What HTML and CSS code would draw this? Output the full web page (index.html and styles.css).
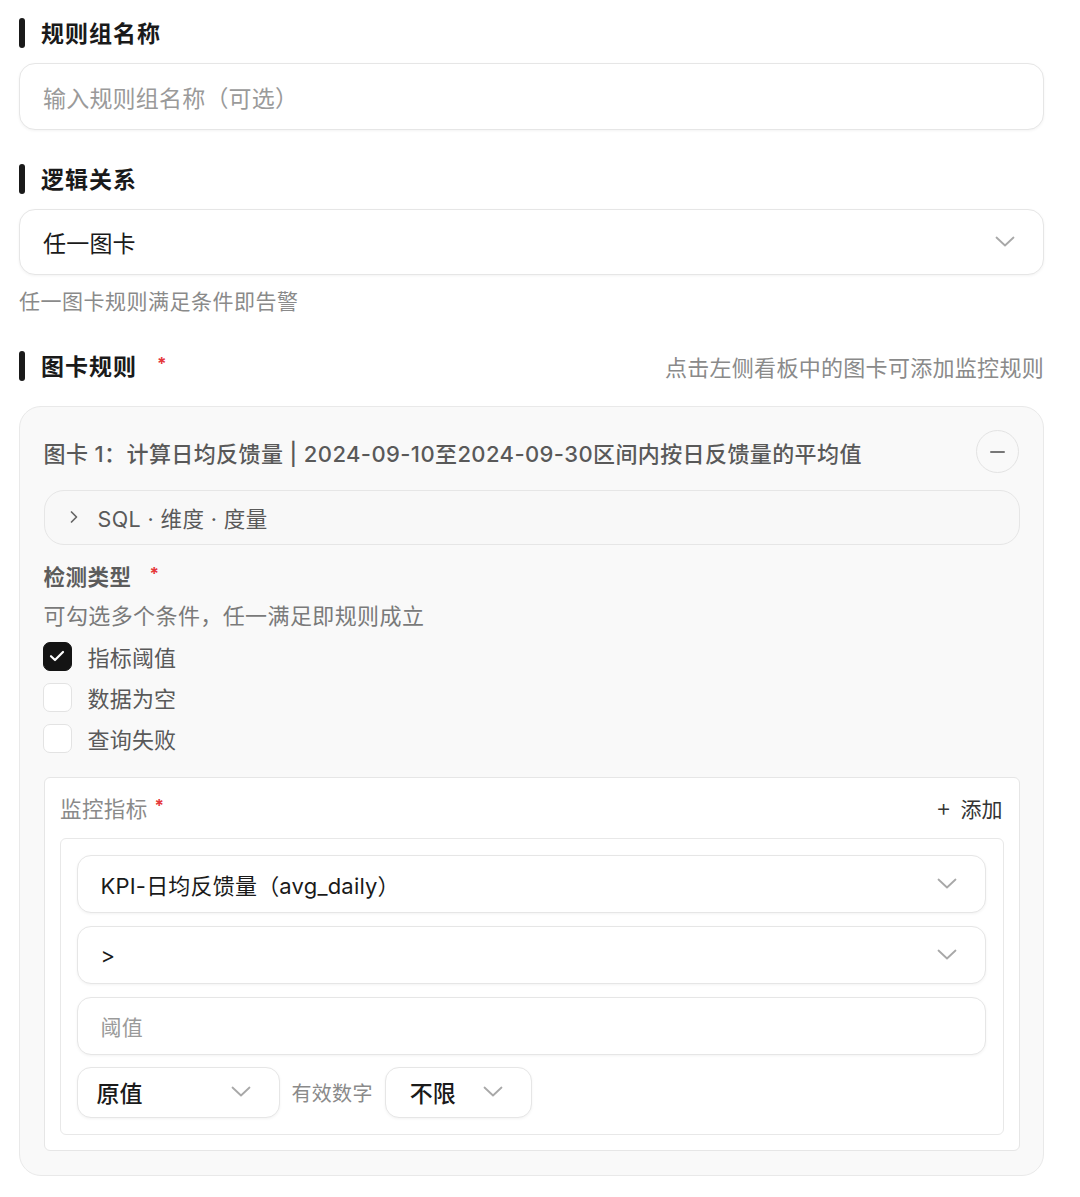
FILE: index.html
```html
<!DOCTYPE html>
<html lang="zh-CN">
<head>
<meta charset="utf-8">
<link rel="stylesheet" href="styles.css">
</head>
<body>
<div class="page">
  <div class="sec-head"><span class="bar"></span><span class="sec-title">规则组名称</span></div>
  <div class="field field-lg"><span class="placeholder">输入规则组名称（可选）</span></div>

  <div class="sec-head sec-gap"><span class="bar"></span><span class="sec-title">逻辑关系</span></div>
  <div class="field field-lg select">
    <span class="value">任一图卡</span>
    <svg class="chev" width="20" height="12" viewBox="0 0 20 12"><path d="M1.5 1.5 L10 9.5 L18.5 1.5" fill="none" stroke="#a8a8a8" stroke-width="1.8" stroke-linecap="round" stroke-linejoin="round"/></svg>
  </div>
  <div class="helper">任一图卡规则满足条件即告警</div>

  <div class="sec-head sec-gap2 between">
    <div class="head-left"><span class="bar"></span><span class="sec-title">图卡规则</span><span class="req req-head">*</span></div>
    <span class="head-tip">点击左侧看板中的图卡可添加监控规则</span>
  </div>

  <div class="card">
    <div class="card-title-row">
      <span class="card-title">图卡 1：计算日均反馈量 | 2024-09-10至2024-09-30区间内按日反馈量的平均值</span>
      <span class="minus-btn"><span class="minus"></span></span>
    </div>
    <div class="collapse-row">
      <svg class="right-chev" width="10" height="16" viewBox="0 0 10 16"><path d="M2.5 3 L7.5 8 L2.5 13" fill="none" stroke="#666" stroke-width="1.7" stroke-linecap="round" stroke-linejoin="round"/></svg>
      <span class="collapse-text">SQL · 维度 · 度量</span>
    </div>
    <div class="label-row"><span class="label">检测类型</span><span class="req req-label">*</span></div>
    <div class="hint">可勾选多个条件，任一满足即规则成立</div>
    <div class="check-list">
      <div class="check-row">
        <span class="box checked"><svg width="16" height="12" viewBox="0 0 16 12"><path d="M2 6.2 L6 10 L14 2" fill="none" stroke="#fff" stroke-width="2.2" stroke-linecap="round" stroke-linejoin="round"/></svg></span>
        <span class="check-text">指标阈值</span>
      </div>
      <div class="check-row"><span class="box"></span><span class="check-text">数据为空</span></div>
      <div class="check-row"><span class="box"></span><span class="check-text">查询失败</span></div>
    </div>

    <div class="metric-box">
      <div class="metric-head">
        <div class="metric-left"><span class="metric-label">监控指标</span><span class="req req-metric">*</span></div>
        <span class="add-btn"><span class="plus">+</span>添加</span>
      </div>
      <div class="metric-inner">
        <div class="field field-md select">
          <span class="value">KPI-日均反馈量（avg_daily）</span>
          <svg class="chev" width="20" height="12" viewBox="0 0 20 12"><path d="M1.5 1.5 L10 9.5 L18.5 1.5" fill="none" stroke="#a8a8a8" stroke-width="1.8" stroke-linecap="round" stroke-linejoin="round"/></svg>
        </div>
        <div class="field field-md select">
          <span class="value">&gt;</span>
          <svg class="chev" width="20" height="12" viewBox="0 0 20 12"><path d="M1.5 1.5 L10 9.5 L18.5 1.5" fill="none" stroke="#a8a8a8" stroke-width="1.8" stroke-linecap="round" stroke-linejoin="round"/></svg>
        </div>
        <div class="field field-md"><span class="placeholder">阈值</span></div>
        <div class="bottom-row">
          <div class="mini-select w-raw">
            <span class="mini-value">原值</span>
            <svg class="chev" width="20" height="12" viewBox="0 0 20 12"><path d="M1.5 1.5 L10 9.5 L18.5 1.5" fill="none" stroke="#a8a8a8" stroke-width="1.8" stroke-linecap="round" stroke-linejoin="round"/></svg>
          </div>
          <span class="mini-label">有效数字</span>
          <div class="mini-select w-limit">
            <span class="mini-value">不限</span>
            <svg class="chev" width="20" height="12" viewBox="0 0 20 12"><path d="M1.5 1.5 L10 9.5 L18.5 1.5" fill="none" stroke="#a8a8a8" stroke-width="1.8" stroke-linecap="round" stroke-linejoin="round"/></svg>
          </div>
        </div>
      </div>
    </div>
  </div>
</div>
</body>
</html>
```

FILE: styles.css
```css
* { box-sizing: border-box; }
html, body { margin: 0; padding: 0; background: #fff; }
body {
  font-family: Inter, "Noto Sans CJK SC", "Noto Sans", sans-serif;
  color: #1f1f1f;
}
.page {
  width: 1025px;
  margin-left: 19px;
  padding-top: 17px;
}
.sec-head {
  height: 32px;
  display: flex;
  align-items: center;
}
.sec-gap { margin-top: 33px; }
.sec-gap2 { margin-top: 33px; }
.between { justify-content: space-between; }
.head-left { display: flex; align-items: center; }
.bar {
  width: 6px;
  height: 30px;
  border-radius: 3px;
  background: #1a1a1a;
  margin-right: 16px;
}
.sec-title {
  font-size: 23px;
  font-weight: 700;
  color: #1a1a1a;
  letter-spacing: 1px;
  position: relative;
  top: -1px;
}
.req { color: #e5383b; font-size: 17px; font-weight: 700; }
.req-head { margin-left: 20px; position: relative; top: -2px; }
.head-tip { font-size: 22px; color: #8a8a8a; letter-spacing: 0.3px; }

.field {
  background: #fff;
  border: 1.5px solid #e6e6e6;
  box-shadow: 0 1px 3px rgba(0,0,0,0.05);
  display: flex;
  align-items: center;
  justify-content: space-between;
}
.field-lg {
  margin-top: 14px;
  height: 67px;
  border-radius: 16px;
  padding: 0 28px 0 23px;
}
.page > .field-lg.select { height: 66px; margin-top: 14px; }
.placeholder { font-size: 23px; color: #9a9a9a; letter-spacing: 0.2px; }
.value { font-size: 23px; color: #1a1a1a; letter-spacing: 0.2px; }
.chev { display: block; }

.helper {
  margin-top: 12px;
  height: 30px;
  line-height: 30px;
  font-size: 21px;
  color: #8a8a8a;
  letter-spacing: 0.5px;
}

.card {
  margin-top: 24px;
  background: #f9f9f9;
  border: 1.5px solid #e9e9e9;
  border-radius: 22px;
  padding: 23.5px 23.5px 24.5px 23.5px;
}
.card-title-row {
  height: 42px;
  display: flex;
  align-items: center;
  justify-content: space-between;
}
.card-title {
  font-size: 22px;
  color: #595959;
  font-weight: 500;
  letter-spacing: 0.4px;
}
.minus-btn {
  width: 43px;
  height: 43px;
  border-radius: 50%;
  border: 1.5px solid #e3e3e3;
  display: flex;
  align-items: center;
  justify-content: center;
  margin-right: 1px;
}
.minus { width: 15px; height: 2px; background: #777; border-radius: 1px; }

.collapse-row {
  margin-top: 17px;
  height: 55px;
  border: 1.5px solid #e6e6e6;
  border-radius: 20px;
  background: #f8f8f8;
  display: flex;
  align-items: center;
  padding-left: 24px;
}
.right-chev { margin-right: 19px; }
.collapse-text { font-size: 21.5px; color: #5a5a5a; letter-spacing: 0.4px; }

.label-row { margin-top: 16px; height: 30px; display: flex; align-items: center; }
.label { font-size: 21.5px; font-weight: 600; color: #5c5c5c; letter-spacing: 0.5px; }
.req-label { margin-left: 18px; position: relative; top: -2px; }
.hint {
  margin-top: 10px;
  height: 30px;
  line-height: 30px;
  font-size: 22px;
  color: #7a7a7a;
  letter-spacing: 0.4px;
}
.check-list { margin-top: 5px; }
.check-row { height: 41px; display: flex; align-items: center; }
.box {
  width: 29px;
  height: 29px;
  border-radius: 7px;
  border: 1.5px solid #e3e3e3;
  background: #fff;
  margin-right: 16px;
  margin-left: -1px;
  display: flex;
  align-items: center;
  justify-content: center;
}
.box.checked { background: #141414; border-color: #141414; }
.check-text { font-size: 22px; color: #595959; letter-spacing: 0.2px; }

.metric-box {
  margin-top: 18px;
  background: #fff;
  border: 1.5px solid #e6e6e6;
  border-radius: 6px;
  padding: 15px 15px 15px 15.5px;
}
.metric-head {
  height: 30px;
  display: flex;
  align-items: center;
  justify-content: space-between;
}
.metric-left { display: flex; align-items: center; }
.metric-label { font-size: 21.5px; color: #8a8a8a; letter-spacing: 0.4px; }
.req-metric { margin-left: 7px; position: relative; top: -2px; }
.add-btn { font-size: 21px; color: #333; display: flex; align-items: center; margin-right: 1px; }
.plus { font-size: 24px; margin-right: 9px; font-weight: 300; }

.metric-inner {
  margin-top: 15px;
  border: 1.5px solid #e8e8e8;
  border-radius: 6px;
  padding: 16px 17px 16px 15.5px;
  display: flex;
  flex-direction: column;
  gap: 13px;
}
.field-md {
  height: 58px;
  border-radius: 14px;
  padding: 0 28px 0 23px;
}
.field-md .value { font-size: 22px; }
.field-md .placeholder { font-size: 21px; }
.bottom-row {
  margin-top: -1px;
  height: 51px;
  display: flex;
  align-items: center;
}
.mini-select {
  height: 51px;
  border: 1.5px solid #e6e6e6;
  border-radius: 14px;
  background: #fff;
  box-shadow: 0 1px 3px rgba(0,0,0,0.05);
  display: flex;
  align-items: center;
  justify-content: space-between;
  padding: 0 28px 0 19px;
}
.w-raw { width: 203px; }
.w-limit { width: 147px; padding-left: 24px; }
.mini-value { font-size: 23px; color: #1a1a1a; font-weight: 500; }
.mini-label { font-size: 20px; color: #8a8a8a; margin: 0 12px; letter-spacing: 0.3px; }
```
